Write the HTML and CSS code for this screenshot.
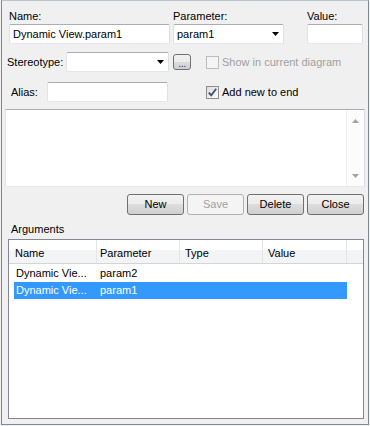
FILE: index.html
```html
<!DOCTYPE html>
<html>
<head>
<meta charset="utf-8">
<link rel="stylesheet" href="styles.css">
</head>
<body>
<div class="dlg">
  <div class="r1">
    <div class="field f-name">
      <div class="lbl">Name:</div>
      <div class="input">Dynamic View.param1</div>
    </div>
    <div class="field f-param">
      <div class="lbl">Parameter:</div>
      <div class="input combo"><span>param1</span><svg class="arrow" width="7" height="4" viewBox="0 0 7 4"><polygon points="0,0 7,0 3.5,4" fill="#000"/></svg></div>
    </div>
    <div class="field f-value">
      <div class="lbl">Value:</div>
      <div class="input"></div>
    </div>
  </div>

  <div class="r2">
    <div class="lbl-st">Stereotype:</div>
    <div class="input combo st-combo"><span></span><svg class="arrow" width="7" height="4" viewBox="0 0 7 4"><polygon points="0,0 7,0 3.5,4" fill="#000"/></svg></div>
    <div class="dots-btn">...</div>
    <div class="chk disabled"></div>
    <div class="chk-lbl disabled-txt">Show in current diagram</div>
  </div>

  <div class="r3">
    <div class="lbl-alias">Alias:</div>
    <div class="input alias-in"></div>
    <div class="chk checked"><svg width="11" height="11" viewBox="0 0 11 11"><path d="M1.8 5.6 L4.2 8.4 L9.2 1.8" fill="none" stroke="#3b4f7a" stroke-width="1.8"/></svg></div>
    <div class="chk-lbl">Add new to end</div>
  </div>

  <div class="memo">
    <div class="memo-body"></div>
    <div class="vscroll">
      <svg width="7" height="4" viewBox="0 0 7 4"><polygon points="0,4 7,4 3.5,0" fill="#a3a3a3"/></svg>
      <svg width="7" height="4" viewBox="0 0 7 4"><polygon points="0,0 7,0 3.5,4" fill="#a3a3a3"/></svg>
    </div>
  </div>

  <div class="btns">
    <div class="btn">New</div>
    <div class="btn btn-dis">Save</div>
    <div class="btn">Delete</div>
    <div class="btn">Close</div>
  </div>

  <div class="grp-lbl">Arguments</div>

  <div class="list">
    <div class="hdr">
      <div class="hc c1">Name</div>
      <div class="hc c2">Parameter</div>
      <div class="hc c3">Type</div>
      <div class="hc c4">Value</div>
    </div>
    <div class="row">
      <div class="rc rc1">Dynamic Vie...</div>
      <div class="rc rc2">param2</div>
    </div>
    <div class="row sel">
      <div class="rc rc1">Dynamic Vie...</div>
      <div class="rc rc2">param1</div>
    </div>
  </div>
</div>
</body>
</html>
```

FILE: styles.css
```css
html, body {
  margin: 0;
  padding: 0;
  background: #f0f0f0;
}
body {
  width: 370px;
  height: 426px;
  overflow: hidden;
  font-family: "Liberation Sans", Arial, sans-serif;
  font-size: 11px;
  color: #000;
}
.dlg {
  margin-left: 1px;
  width: 368px;
  height: 425px;
  box-sizing: border-box;
  border: 1px solid #7d8a96;
  border-top-color: #b9c4ce;
  background: #f0f0f0;
}
.r1 {
  display: flex;
  margin-top: 8px;
  padding-left: 7px;
}
.lbl {
  line-height: 14px;
  height: 14px;
  margin-bottom: 1px;
}
.f-name { width: 161px; }
.f-param { width: 111px; margin-left: 3px; }
.f-value { width: 56px; margin-left: 23px; }
.input {
  height: 20px;
  box-sizing: border-box;
  background: #fff;
  border: 1px solid;
  border-color: #abadb3 #dbdfe6 #e3e9ef #e2e3ea;
  border-radius: 2px;
  padding-left: 3px;
  line-height: 18px;
  white-space: nowrap;
  overflow: hidden;
}
.combo {
  display: flex;
  align-items: center;
  justify-content: space-between;
  padding-right: 4px;
}
.combo span { line-height: 18px; }
.arrow { flex: none; }
.r2 {
  display: flex;
  align-items: center;
  height: 20px;
  margin-top: 8px;
  padding-left: 5px;
}
.lbl-st { width: 59px; }
.st-combo { width: 103px; }
.dots-btn {
  margin-left: 4px;
  width: 18px;
  height: 16px;
  box-sizing: border-box;
  border: 1px solid #707070;
  border-radius: 3px;
  background: linear-gradient(#f2f2f2 0, #ebebeb 50%, #dddddd 50%, #cfcfcf 100%);
  text-align: center;
  line-height: 16px;
  font-size: 11px;
  color: #1a3a7a;
  letter-spacing: -0.5px;
}
.r2 .chk { margin-left: 15px; }
.chk {
  width: 13px;
  height: 13px;
  box-sizing: border-box;
  border: 1px solid #8e8f8f;
  background: linear-gradient(135deg, #dcdcdc, #fbfbfb);
  display: flex;
  align-items: center;
  justify-content: center;
  flex: none;
}
.chk.disabled {
  border-color: #bcbcbc;
  background: #f4f4f4;
}
.chk-lbl {
  margin-left: 3px;
  white-space: nowrap;
}
.disabled-txt { color: #a0a0a0; }
.r3 {
  display: flex;
  align-items: center;
  height: 20px;
  margin-top: 10px;
  padding-left: 9px;
}
.lbl-alias { width: 36px; }
.alias-in { width: 121px; }
.r3 .chk { margin-left: 38px; }
.memo {
  display: flex;
  margin-top: 7px;
  margin-left: 3px;
  width: 360px;
  height: 78px;
  box-sizing: border-box;
  background: #fff;
  border: 1px solid;
  border-color: #abadb3 #dbdfe6 #e3e9ef #e2e3ea;
}
.memo-body { flex: 1; }
.vscroll {
  width: 18px;
  display: flex;
  flex-direction: column;
  align-items: center;
  justify-content: space-between;
  padding: 9px 0 8px;
  box-sizing: border-box;
  background: #fcfcfc;
  border-left: 1px solid #f0f0f0;
}
.btns {
  display: flex;
  justify-content: flex-end;
  gap: 3px;
  margin-top: 7px;
  padding-right: 4px;
}
.btn {
  width: 57px;
  height: 21px;
  box-sizing: border-box;
  border: 1px solid #707070;
  border-radius: 3px;
  background: linear-gradient(#f2f2f2 0, #ebebeb 50%, #dddddd 50%, #cfcfcf 100%);
  text-align: center;
  line-height: 19px;
}
.btn-dis {
  border-color: #adb2b5;
  background: #f4f4f4;
  color: #a0a0a0;
}
.grp-lbl {
  margin-top: 7px;
  padding-left: 9px;
  line-height: 14px;
  height: 14px;
}
.list {
  margin-top: 3px;
  margin-left: 6px;
  width: 356px;
  height: 180px;
  box-sizing: border-box;
  border: 1px solid #828790;
  background: #fff;
}
.hdr {
  display: flex;
  height: 24px;
  box-sizing: border-box;
  border-bottom: 1px solid #d5d5d5;
  background: linear-gradient(#ffffff 0, #ffffff 45%, #f3f4f6 45%, #f3f4f6 100%);
}
.hc {
  box-sizing: border-box;
  border-right: 1px solid #e3e5e8;
  padding-top: 4px;
  line-height: 18px;
  white-space: nowrap;
}
.c1 { width: 88px; padding-left: 6px; }
.c2 { width: 83px; padding-left: 3px; }
.c3 { width: 83px; padding-left: 5px; }
.c4 { width: 84px; padding-left: 5px; }
.row {
  display: flex;
  margin-top: 1px;
  margin-left: 5px;
  width: 333px;
  height: 17px;
  line-height: 17px;
  white-space: nowrap;
}
.row + .row { margin-top: 0; }
.rc1 { width: 83px; padding-left: 2px; box-sizing: border-box; }
.rc2 { padding-left: 3px; }
.sel {
  background: #3399ff;
  color: #fff;
}
```
